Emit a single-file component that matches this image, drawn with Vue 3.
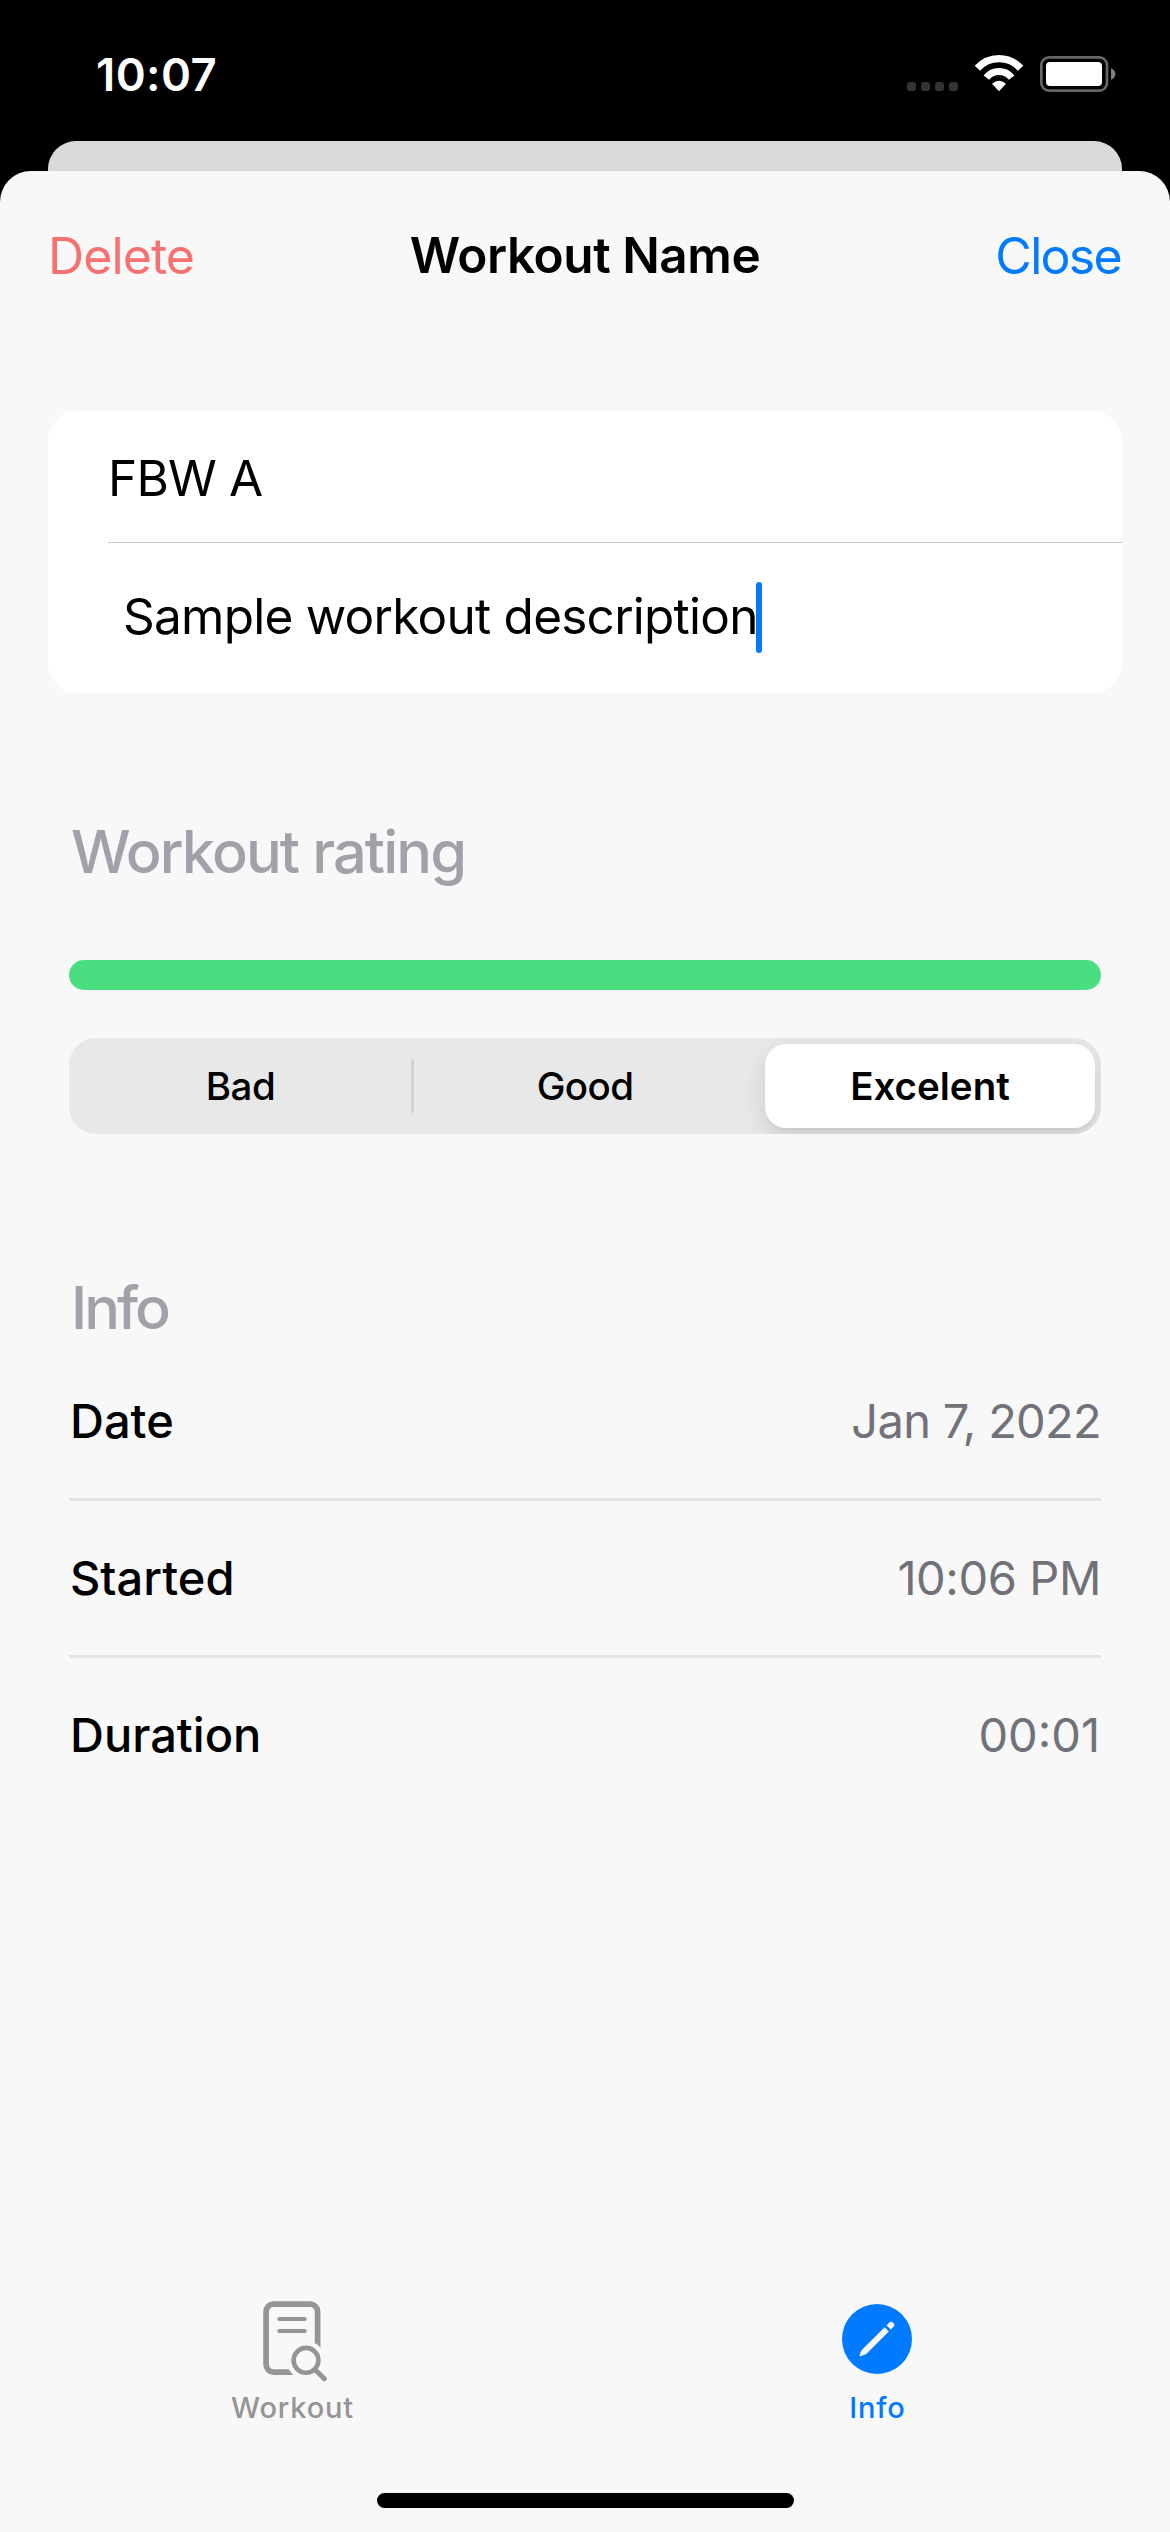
<script setup>
import { ref } from 'vue'

const ratings = ['Bad', 'Good', 'Excelent']
const selected = ref('Excelent')

const details = [
  { label: 'Date', value: 'Jan 7, 2022', cls: 'v-date' },
  { label: 'Started', value: '10:06 PM', cls: 'v-time' },
  { label: 'Duration', value: '00:01', cls: 'v-dur' },
]
</script>

<template>
  <div class="phone">
    <div class="status">
      <span class="clock">10:07</span>
      <svg class="status-icons" viewBox="69 60 648 147">
        <g fill="#333">
          <rect x="81" y="156" width="27" height="27" rx="8" />
          <rect x="123" y="156" width="27" height="27" rx="8" />
          <rect x="165" y="156" width="27" height="27" rx="8" />
          <rect x="207" y="156" width="27" height="27" rx="8" />
        </g>
        <g fill="none" stroke="#fff">
          <path d="M292.3 114.8A87 87 0 0 1 421.7 114.8" stroke-width="22" />
          <path d="M319 142.8A48.5 48.5 0 0 1 395 142.8" stroke-width="21" />
        </g>
        <path d="M336 161Q357 143 378 161L357 184Z" fill="#fff" />
        <rect x="484" y="82" width="197" height="100" rx="23" fill="none" stroke="#666" stroke-width="8" />
        <rect x="498" y="96" width="168" height="72" rx="12" fill="#fff" />
        <path d="M693 115Q706 120 706 132Q706 144 693 149Z" fill="#808080" />
      </svg>
    </div>

    <div class="back-card"></div>

    <main class="sheet">
      <header class="bar">
        <span class="delete">Delete</span>
        <h1 class="title">Workout Name</h1>
        <span class="close">Close</span>
      </header>

      <section class="card">
        <div class="name-row"><span class="name">FBW A</span></div>
        <div class="desc-row">
          <span class="desc">Sample workout description</span>
          <i class="caret"></i>
        </div>
      </section>

      <section class="rating">
        <h2 class="h-rating">Workout rating</h2>
        <div class="meter"></div>
        <div class="segments">
          <div
            v-for="r in ratings"
            :key="r"
            class="segment"
            :class="[r.toLowerCase(), { active: r === selected }]"
            @click="selected = r"
          >
            <span>{{ r }}</span>
          </div>
        </div>
      </section>

      <section class="info">
        <h2 class="h-info">Info</h2>
        <div v-for="d in details" :key="d.label" class="row">
          <span class="label">{{ d.label }}</span>
          <span class="value" :class="d.cls">{{ d.value }}</span>
        </div>
      </section>

      <nav class="tabs">
        <div class="tab">
          <svg viewBox="0 0 75 84" class="tab-icon" fill="none" stroke="#959595">
            <mask id="lens-gap" maskUnits="userSpaceOnUse" x="0" y="0" width="75" height="84">
              <rect width="75" height="84" fill="#fff" stroke="none" />
              <circle cx="51" cy="62.3" r="19.3" fill="#000" stroke="none" />
            </mask>
            <rect x="11.1" y="6.1" width="51.5" height="68" rx="7.5" stroke-width="5.7" mask="url(#lens-gap)" />
            <path d="M24.3 21H49.7M24.3 33H49.7" stroke-width="4" stroke-linecap="round" />
            <circle cx="51" cy="62.3" r="12.4" stroke-width="4.6" />
            <path d="M60 71.5L69.3 80.7" stroke-width="5" stroke-linecap="round" />
          </svg>
          <span class="tab-label">Workout</span>
        </div>
        <div class="tab current">
          <svg viewBox="0 0 75 84" class="tab-icon">
            <circle cx="37" cy="41" r="35" fill="#007aff" />
            <g fill="#f8f8f8">
              <path d="M44.7 29.3L48.8 33.6L26.3 56Q23.5 57.6 20 58.2Q19.4 58.2 19.6 57.4Q20.3 54 22 51.8Z" />
              <path d="M46.5 27.4L49.3 24.6Q51 23 53 24.5Q55.2 26.6 53.7 28.6L50.8 31.5Z" />
            </g>
          </svg>
          <span class="tab-label">Info</span>
        </div>
      </nav>
      <div class="home"></div>
    </main>
  </div>
</template>

<style>
body {
  margin: 0;
  background: #000;
}
</style>

<style scoped>
.phone {
  display: flex;
  flex-direction: column;
  width: 1170px;
  height: 2532px;
  overflow: hidden;
  background: #000;
  color: #000;
  font-family: Inter, 'Liberation Sans', sans-serif;
  white-space: nowrap;
}

h1,
h2 {
  margin: 0;
}

.status {
  box-sizing: border-box;
  flex: none;
  display: flex;
  align-items: center;
  justify-content: space-between;
  height: 141px;
  padding: 8px 51px 0 96px;
}

.clock {
  color: #fff;
  font-size: 45.5px;
  font-weight: 600;
  letter-spacing: 0.4px;
}

.status-icons {
  width: 216px;
  height: 49px;
}

.back-card {
  flex: none;
  height: 30px;
  margin: 0 48px;
  border-radius: 28px 28px 0 0;
  background: #dadada;
}

.sheet {
  flex: 1;
  display: flex;
  flex-direction: column;
  border-radius: 31px 31px 0 0;
  background: #f8f8f8;
}

.bar {
  display: grid;
  grid-template-columns: 1fr auto 1fr;
  align-items: center;
  height: 170px;
  padding: 0 48px;
  font-size: 50px;
}

.delete {
  color: #f87171;
  letter-spacing: -0.9px;
}

.title {
  padding-bottom: 2px;
  font-size: 49.5px;
  font-weight: 600;
  letter-spacing: -0.45px;
}

.close {
  justify-self: end;
  margin-right: 1px;
  color: #007aff;
  letter-spacing: -1.7px;
}

.card {
  margin: 70px 48px 0;
  height: 282px;
  border-radius: 30px;
  background: #fff;
  font-size: 49.5px;
}

.name-row {
  box-sizing: border-box;
  display: flex;
  align-items: center;
  height: 132px;
  margin-left: 60px;
  padding-top: 3px;
  border-bottom: 1px solid #c6c6c8;
  letter-spacing: -0.8px;
}

.desc-row {
  box-sizing: border-box;
  display: flex;
  align-items: center;
  height: 150px;
  padding: 0 0 4px 75px;
  letter-spacing: -0.75px;
}

.caret {
  width: 6px;
  height: 71px;
  margin: 3px 0 0 -2px;
  border-radius: 3px;
  background: #007aff;
}

.rating {
  margin: 122px 69px 0;
}

h2 {
  padding-left: 2px;
  color: #a1a1aa;
  font-size: 59.5px;
  font-weight: 500;
  line-height: 73px;
}

.h-rating {
  letter-spacing: -1.9px;
}

.h-info {
  letter-spacing: -3px;
}

.meter {
  height: 30px;
  margin-top: 72px;
  border-radius: 15px;
  background: #4ade80;
}

.segments {
  box-sizing: border-box;
  display: grid;
  grid-template-columns: 345px 345px 330px;
  height: 96px;
  margin-top: 48px;
  padding: 6px;
  border-radius: 27px;
  background: #e8e8e8;
  overflow: hidden;
}

.segment {
  display: flex;
  align-items: center;
  justify-content: center;
  font-size: 38.5px;
  font-weight: 500;
}

.segment.bad {
  position: relative;
  padding-right: 14px;
  letter-spacing: -0.4px;
}

.segment.bad::after {
  content: '';
  position: absolute;
  right: 6px;
  top: 15px;
  width: 3px;
  height: 54px;
  border-radius: 2px;
  background: #d3d3d3;
}

.segment.good {
  padding-right: 15px;
  letter-spacing: -0.6px;
}

.segment.active {
  border-radius: 21px;
  background: #fff;
  box-shadow: 0 9px 24px rgba(0, 0, 0, 0.12), 0 3px 3px rgba(0, 0, 0, 0.04);
  font-weight: 600;
}

.info {
  margin: 137px 69px 0;
}

.row {
  box-sizing: border-box;
  display: flex;
  align-items: center;
  justify-content: space-between;
  height: 157px;
  padding-bottom: 5px;
  font-size: 47px;
}

.row:not(:last-child) {
  padding-bottom: 2px;
  border-bottom: 3px solid #e4e4e4;
}

.label {
  padding-left: 1px;
  font-weight: 500;
}

.value {
  color: #71717a;
}

.v-date {
  letter-spacing: -0.7px;
}

.v-time {
  letter-spacing: -0.4px;
}

.v-dur {
  padding-right: 1px;
}

.tabs {
  display: grid;
  grid-template-columns: 1fr 1fr;
  margin-top: auto;
}

.tab {
  display: flex;
  flex-direction: column;
  align-items: center;
  gap: 7px;
  color: #959595;
}

.tab.current {
  color: #007aff;
}

.tab-icon {
  width: 75px;
  height: 84px;
}

.tab-label {
  font-size: 29px;
  font-weight: 500;
  letter-spacing: 0.8px;
  line-height: 37px;
}

.home {
  align-self: center;
  width: 417px;
  height: 15px;
  margin: 67px 0 24px;
  border-radius: 8px;
  background: #000;
}
</style>
